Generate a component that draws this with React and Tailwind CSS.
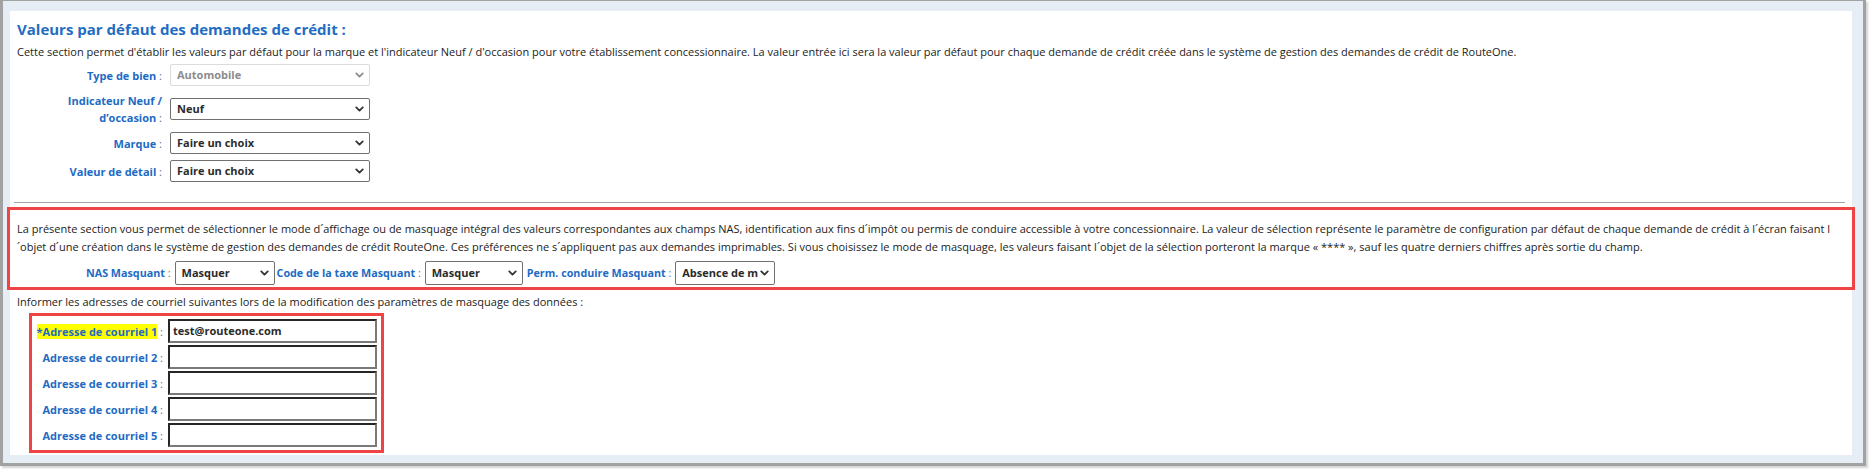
import React from "react";

const Chevron = ({ className }) => (
  <svg
    viewBox="0 0 10 6"
    className={className}
    fill="none"
    stroke="currentColor"
    strokeWidth="2"
    strokeLinecap="round"
    strokeLinejoin="round"
  >
    <path d="M1.4 1.2 5 4.7 8.6 1.2" />
  </svg>
);

// select look-alike, so the arrow and clipping stay the same everywhere
const FakeSelect = ({ value, className, disabled }) => (
  <div
    className={`flex items-center rounded-[2px] border bg-white pl-[6px] pr-[5px] text-[11px] font-bold ${className} ${
      disabled ? "border-[#dcdcdc] text-[#8c8c8c]" : "border-[#717171] text-[#2b2b2b]"
    }`}
  >
    <span className="min-w-0 flex-1 overflow-hidden whitespace-nowrap">{value}</span>
    <Chevron
      className={`ml-[2px] h-[6px] w-[9px] shrink-0 ${disabled ? "text-[#8c8c8c]" : "text-[#333333]"}`}
    />
  </div>
);

const Label = ({ children }) => (
  <>
    <span className="font-bold text-[#1d6bc4]">{children}</span>
    <span className="text-[#5b6f8c]">&nbsp;:</span>
  </>
);

const FormRow = ({ label, value, disabled }) => (
  <div className="flex items-center py-[3px]">
    <div className="w-[153px] pr-[8px] text-right text-[11px] leading-[17px]">
      <Label>{label}</Label>
    </div>
    <FakeSelect value={value} disabled={disabled} className="h-[22px] w-[200px]" />
  </div>
);

const EmailRow = ({ n, value, required }) => (
  <div className="flex items-center">
    <div className="w-[131px] text-right text-[11px] leading-[17px] whitespace-nowrap">
      {required ? (
        <>
          <span className="bg-[#ffff00] font-bold text-[#1d6bc4]">*Adresse de courriel {n}</span>
          <span className="text-[#5b6f8c]">&nbsp;:</span>
        </>
      ) : (
        <Label>Adresse de courriel {n}</Label>
      )}
    </div>
    <div className="ml-[5px] flex h-[24px] w-[209px] items-center border-2 border-t-[#262626] border-l-[#262626] border-r-[#7a7a7a] border-b-[#7a7a7a] bg-white px-[3px] text-[11px] font-bold text-[#2b2b2b]">
      {value}
    </div>
  </div>
);

const App = () => {
  return (
    <div className="min-h-screen bg-white font-['Open_Sans',sans-serif] text-[#222222]">
      <div className="h-[466px] w-[1866px] border-t border-l-[3px] border-r-[3px] border-b-[3px] border-[#a2a2a2] bg-[#e7edf5] pt-[10px] pb-[7px] pl-[7px] pr-[11px] shadow-[2px_2px_2px_rgba(0,0,0,0.18)]">
        <div className="flex h-[444px] flex-col overflow-visible bg-white pl-[7px] pt-[8px]">
          <h1 className="text-[15px] font-bold leading-[20px] text-[#1f6dc2]">
            Valeurs par défaut des demandes de crédit :
          </h1>
          <p className="mt-[5px] whitespace-nowrap text-[11px] leading-[16px]">
            Cette section permet d'établir les valeurs par défaut pour la marque et l'indicateur Neuf / d'occasion pour votre établissement concessionnaire. La valeur entrée ici sera la valeur par défaut pour chaque demande de crédit créée dans le système de gestion des demandes de crédit de RouteOne.
          </p>

          <div className="mt-[1px] flex flex-col">
            <FormRow label="Type de bien" value="Automobile" disabled />
            <FormRow
              label={
                <>
                  Indicateur Neuf /<br />
                  d’occasion
                </>
              }
              value="Neuf"
            />
            <FormRow label="Marque" value="Faire un choix" />
            <FormRow label="Valeur de détail" value="Faire un choix" />
          </div>

          <div className="-ml-[3px] mr-[7px] mt-[17px] h-px bg-[#a3a3a3]" />

          {/* masking section */}
          <div className="-ml-[10px] -mr-[3px] mt-[4px] border-[3px] border-[#f04343] pb-[2px] pl-[7px] pt-[10px]">
            <p className="whitespace-nowrap text-[11px] leading-[18px]">
              La présente section vous permet de sélectionner le mode d´affichage ou de masquage intégral des valeurs correspondantes aux champs NAS, identification aux fins d´impôt ou permis de conduire accessible à votre concessionnaire. La valeur de sélection représente le paramètre de configuration par défaut de chaque demande de crédit à l´écran faisant l
              <br />
              ´objet d´une création dans le système de gestion des demandes de crédit RouteOne. Ces préférences ne s´appliquent pas aux demandes imprimables. Si vous choisissez le mode de masquage, les valeurs faisant l´objet de la sélection porteront la marque « **** », sauf les quatre derniers chiffres après sortie du champ.
            </p>
            <div className="mt-[5px] ml-[69px] flex h-[24px] items-center text-[10.75px] whitespace-nowrap">
              <Label>NAS Masquant</Label>
              <FakeSelect value="Masquer" className="ml-[4px] h-[24px] w-[100px]" />
              <span className="ml-[2px]">
                <Label>Code de la taxe Masquant</Label>
              </span>
              <FakeSelect value="Masquer" className="ml-[4px] h-[24px] w-[98px]" />
              <span className="ml-[4px]">
                <Label>Perm. conduire Masquant</Label>
              </span>
              <FakeSelect value="Absence de masquage" className="ml-[4px] h-[24px] w-[100px]" />
            </div>
          </div>

          <p className="mt-[4px] whitespace-nowrap text-[11px] leading-[16px]">
            Informer les adresses de courriel suivantes lors de la modification des paramètres de masquage des données :
          </p>

          {/* notification e-mails */}
          <div className="ml-[12px] mt-[3px] flex w-[355px] flex-col gap-[2px] border-[3px] border-[#f04343] py-[3px]">
            <EmailRow n={1} value="test@routeone.com" required />
            <EmailRow n={2} />
            <EmailRow n={3} />
            <EmailRow n={4} />
            <EmailRow n={5} />
          </div>
        </div>
      </div>
    </div>
  );
};

export default App;
